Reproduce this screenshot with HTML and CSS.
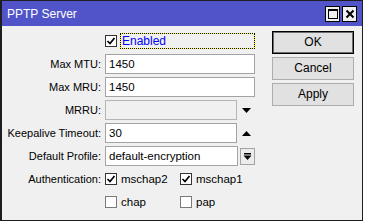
FILE: index.html
```html
<!DOCTYPE html>
<html>
<head>
<meta charset="utf-8">
<link rel="stylesheet" href="styles.css">
</head>
<body>
<div class="win">
  <div class="titlebar">
    <span class="title">PPTP Server</span>
    <span class="tbtns">
      <span class="tbtn"><svg width="10" height="10" viewBox="0 0 10 10"><rect x="0.5" y="0.5" width="9" height="9" fill="none" stroke="#000" stroke-width="1"/><rect x="0" y="0" width="10" height="2" fill="#000"/></svg></span>
      <span class="tbtn"><svg width="10" height="10" viewBox="0 0 10 10"><path d="M1.5 1.5 L8.5 8.5 M8.5 1.5 L1.5 8.5" stroke="#000" stroke-width="2"/></svg></span>
    </span>
  </div>
  <div class="content">
    <div class="form">
      <div class="label"></div>
      <div class="ctl"><span class="cb on"><svg width="10" height="10" viewBox="0 0 10 10"><path d="M1.5 5 L4 7.5 L8.5 2" fill="none" stroke="#000" stroke-width="1.7"/></svg></span><span class="focus">Enabled</span></div>

      <div class="label">Max MTU:</div>
      <div class="ctl"><span class="inp">1450</span></div>

      <div class="label">Max MRU:</div>
      <div class="ctl"><span class="inp">1450</span></div>

      <div class="label">MRRU:</div>
      <div class="ctl"><span class="inp short dis"></span><span class="arrow"><svg width="9" height="5" viewBox="0 0 9 5"><polygon points="0,0 9,0 4.5,5" fill="#000"/></svg></span></div>

      <div class="label">Keepalive Timeout:</div>
      <div class="ctl"><span class="inp short">30</span><span class="arrow"><svg width="9" height="5" viewBox="0 0 9 5"><polygon points="0,5 9,5 4.5,0" fill="#000"/></svg></span></div>

      <div class="label">Default Profile:</div>
      <div class="ctl"><span class="inp short">default-encryption</span><span class="ddbtn"><svg width="9" height="9" viewBox="0 0 9 9"><rect x="1" y="1" width="7" height="1.5" fill="#000"/><polygon points="0.5,3.5 8.5,3.5 4.5,8" fill="#000"/></svg></span></div>

      <div class="label">Authentication:</div>
      <div class="ctl">
        <span class="opt"><span class="cb on"><svg width="10" height="10" viewBox="0 0 10 10"><path d="M1.5 5 L4 7.5 L8.5 2" fill="none" stroke="#000" stroke-width="1.7"/></svg></span><span class="otext">mschap2</span></span>
        <span class="opt"><span class="cb on"><svg width="10" height="10" viewBox="0 0 10 10"><path d="M1.5 5 L4 7.5 L8.5 2" fill="none" stroke="#000" stroke-width="1.7"/></svg></span><span class="otext">mschap1</span></span>
      </div>

      <div class="label"></div>
      <div class="ctl">
        <span class="opt"><span class="cb"></span><span class="otext">chap</span></span>
        <span class="opt"><span class="cb"></span><span class="otext">pap</span></span>
      </div>
    </div>
    <div class="buttons">
      <div class="btn def">OK</div>
      <div class="btn">Cancel</div>
      <div class="btn">Apply</div>
    </div>
  </div>
</div>
</body>
</html>
```
FILE: styles.css
```css
html, body {
  margin: 0;
  padding: 0;
  background: #ffffff;
}
body {
  font-family: "Liberation Sans", Arial, sans-serif;
  font-size: 11px;
  color: #000;
}
.win {
  width: 363px;
  height: 221px;
  box-sizing: border-box;
  border: 1px solid #1e1e1e;
  border-left-width: 2px;
  background: #f0f0f0;
  box-shadow: 0 1px 0 #a8a8a8;
  display: flex;
  flex-direction: column;
}
.titlebar {
  height: 25px;
  background: #5054c8;
  display: flex;
  align-items: center;
  justify-content: space-between;
  padding: 0 5px 0 5px;
}
.title {
  color: #fff;
  font-size: 12px;
  padding-top: 1px;
}
.tbtns {
  display: flex;
  gap: 2px;
  margin-top: 1px;
}
.tbtn {
  width: 13px;
  height: 14px;
  border: 1px solid #000;
  background: #f0f0f0;
  display: flex;
  align-items: center;
  justify-content: center;
}
.content {
  display: flex;
  padding: 5px 0 0 0;
}
.form {
  display: grid;
  grid-template-columns: 99px 150px;
  grid-auto-rows: 20px;
  row-gap: 3px;
  column-gap: 4px;
}
.label {
  text-align: right;
  line-height: 20px;
  white-space: nowrap;
}
.ctl {
  display: flex;
  align-items: center;
}
.cb {
  width: 10px;
  height: 10px;
  border: 1px solid #7a7a7a;
  background: #fff;
  display: inline-flex;
  align-items: center;
  justify-content: center;
  flex: none;
}
.cb.on {
  border-color: #333;
}
.focus {
  margin-left: 3px;
  flex: 1;
  height: 14px;
  line-height: 14px;
  padding-left: 1px;
  font-size: 12px;
  color: #0000ff;
  border: 1px dotted #000;
  background: linear-gradient(#f0f0f0, #f0f0f0) padding-box, linear-gradient(#ffff00, #ffff00) border-box;
}
.inp {
  box-sizing: border-box;
  width: 150px;
  height: 20px;
  border: 1px solid #a3a3a3;
  background: #fff;
  line-height: 18px;
  padding-left: 3px;
  font-size: 11.5px;
  white-space: nowrap;
  overflow: hidden;
}
.inp.short {
  width: 133px;
}
.inp.dis {
  background: #f0f0f0;
  border-color: #b5b5b5;
}
.arrow {
  width: 17px;
  display: flex;
  justify-content: center;
  padding-left: 1px;
}
.ddbtn {
  box-sizing: border-box;
  margin-left: 2px;
  width: 15px;
  height: 17px;
  border: 1px solid #a3a3a3;
  background: #ececec;
  display: flex;
  align-items: center;
  justify-content: center;
}
.opt {
  display: flex;
  align-items: center;
  width: 77px;
}
.otext {
  margin-left: 4px;
  font-size: 11.5px;
}
.buttons {
  margin-left: 17px;
  display: flex;
  flex-direction: column;
  gap: 3px;
}
.btn {
  box-sizing: border-box;
  width: 82px;
  height: 23px;
  border: 1px solid #adadad;
  background: #e1e1e1;
  text-align: center;
  line-height: 21px;
  font-size: 12px;
}
.btn.def {
  border: 1px solid #000;
  box-shadow: inset 0 0 0 1px #6d6d6d;
}
```
